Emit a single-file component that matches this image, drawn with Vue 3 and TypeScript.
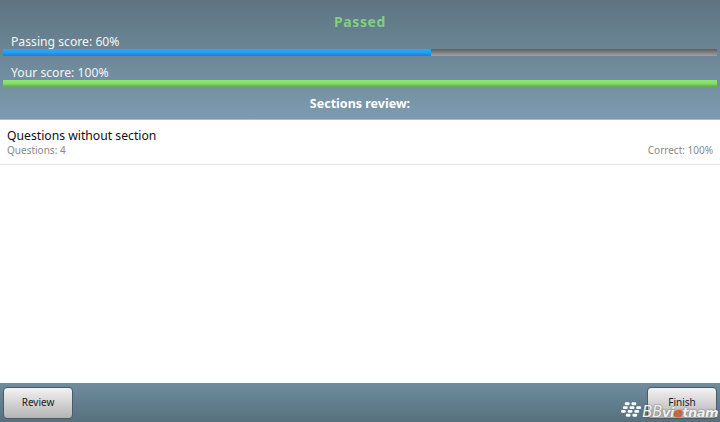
<script setup lang="ts">
interface Bar { label: string; value: number; kind: string }
const bars: Bar[] = [
  { label: 'Passing score: 60%', value: 60, kind: 'blue' },
  { label: 'Your score: 100%', value: 100, kind: 'green' },
]
const dots = [
  [4, 0], [11, 0], [2, 4], [9, 4], [16, 4], [0, 8], [7, 8], [14, 8], [5, 12], [12, 12],
]
</script>

<template>
  <div class="screen">
    <header class="head">
      <div class="status">Passed</div>
      <div v-for="bar in bars" :key="bar.label" class="score">
        <div class="score-label">{{ bar.label }}</div>
        <div class="track">
          <div class="fill" :class="bar.kind" :style="{ width: bar.value + '%' }"></div>
        </div>
      </div>
      <div class="sections">Sections review:</div>
    </header>
    <main class="list">
      <div class="row">
        <div class="row-title">Questions without section</div>
        <div class="row-meta">
          <span>Questions: 4</span>
          <span>Correct: 100%</span>
        </div>
      </div>
    </main>
    <footer class="foot">
      <button class="btn">Review</button>
      <button class="btn">Finish</button>
    </footer>
    <div class="mark">
      <svg class="mark-logo" width="20" height="15" viewBox="0 0 21 15">
        <rect v-for="(d, i) in dots" :key="i" :x="d[0]" :y="d[1]" width="5" height="3" rx="1.2" fill="#fff" />
      </svg>
      <span class="mark-text"><span class="mark-bb">BB</span>vi<span class="mark-e">e</span>tnam</span>
    </div>
  </div>
</template>

<style>
html, body { margin: 0; padding: 0; }
</style>

<style scoped>
.screen {
  position: relative;
  width: 720px;
  height: 422px;
  display: flex;
  flex-direction: column;
  overflow: hidden;
  background: #fff;
  font-family: "Noto Sans", "Open Sans", sans-serif;
}
.head {
  height: 120px;
  box-sizing: border-box;
  padding-top: 13px;
  background: linear-gradient(#5e7581, #7d9bb0);
  color: #fff;
  border-bottom: 1px solid #a9bcc8;
}
.status {
  height: 18px;
  line-height: 18px;
  text-align: center;
  font-size: 14px;
  font-weight: 700;
  letter-spacing: 0.6px;
  color: #80d080;
}
.score { padding: 0 3px; }
.score-label {
  height: 18px;
  line-height: 21px;
  padding-left: 8px;
  font-size: 12.2px;
  color: #f4f6f7;
}
.score + .score .score-label { margin-top: 6px; }
.track {
  height: 7px;
  background: linear-gradient(#5e5e5e, #a2a2a2);
}
.fill { height: 100%; }
.blue { background: linear-gradient(#28aaf8, #24a0f0 50%, #1c80cc); }
.green { background: linear-gradient(#8ce86c, #84de66 50%, #5fa64c); }
.sections {
  margin-top: 8px;
  text-align: center;
  font-size: 12.5px;
  line-height: 18px;
  font-weight: 700;
}
.list { flex: 1; }
.row {
  height: 45px;
  box-sizing: border-box;
  padding: 7px 7px 0;
  border-bottom: 1px solid #e6e6e6;
}
.row-title {
  font-size: 12.2px;
  line-height: 17px;
  color: #111;
}
.row-meta {
  display: flex;
  justify-content: space-between;
  font-size: 10px;
  line-height: 13px;
  color: #8a8a8a;
}
.foot {
  height: 39px;
  box-sizing: border-box;
  display: flex;
  justify-content: space-between;
  padding: 4px 3px 0;
  background: linear-gradient(#6f8d9e, #56707e);
}
.btn {
  width: 70px;
  height: 32px;
  padding: 0 0 3px;
  font-family: inherit;
  font-size: 10px;
  color: #222;
  background: linear-gradient(#f2f2f2, #b4b4b4);
  border: 1px solid #4b5a63;
  border-radius: 4px;
}
.mark {
  position: absolute;
  right: 2px;
  bottom: 1px;
  display: flex;
  align-items: flex-end;
  gap: 1px;
}
.mark-logo { margin-bottom: 4px; }
.mark-text {
  font-family: "DejaVu Sans", sans-serif;
  font-style: italic;
  font-weight: 700;
  font-size: 13px;
  letter-spacing: -0.5px;
  color: #eef2f4;
  text-shadow: 0 0 2px #555;
}
.mark-bb { font-size: 15px; font-weight: 400; }
.mark-e { color: #f05a10; }
</style>
